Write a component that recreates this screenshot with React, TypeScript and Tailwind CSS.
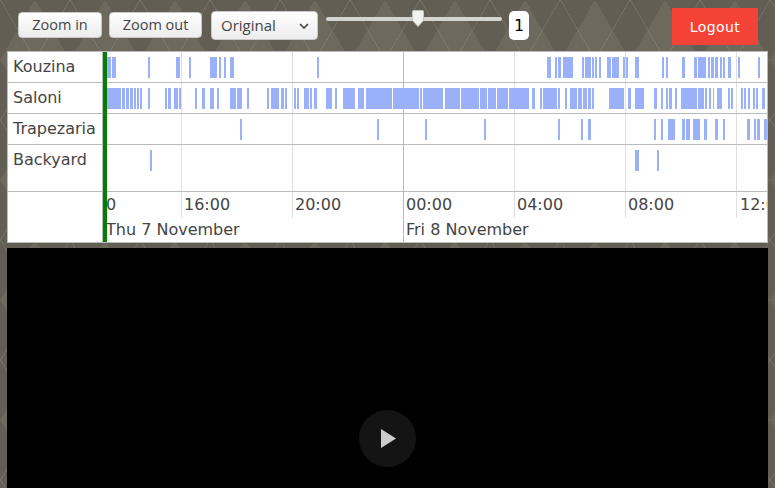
import React from "react";

type Span = [number, number];

// [start, end] in page pixels, taken from the recording timeline
const rows: { name: string; height: string; spans: Span[] }[] = [
  {
    name: "Kouzina",
    height: "h-[31px]",
    spans: [
      [107, 111], [112, 116], [148, 150], [176, 180], [189, 191], [210, 217], [219, 221], [224, 226], [230, 234], [317, 319],
      [547, 551], [555, 557], [558, 561], [563, 573], [582, 584], [585, 591], [592, 594], [595, 597], [599, 601], [607, 611],
      [612, 619], [623, 625], [626, 628], [635, 639], [662, 664], [666, 668], [682, 685], [694, 697], [698, 706], [708, 710],
      [711, 714], [715, 718], [720, 722], [723, 725], [728, 731], [738, 740], [758, 760],
    ],
  },
  {
    name: "Saloni",
    height: "h-[31px]",
    spans: [
      [107, 121], [122, 125], [126, 129], [130, 133], [134, 136], [137, 139], [140, 142], [148, 150], [165, 167], [168, 171],
      [174, 178], [179, 181], [195, 197], [202, 205], [210, 214], [217, 219], [230, 236], [237, 242], [247, 249], [267, 269],
      [271, 279], [281, 284], [285, 287], [294, 296], [297, 299], [304, 309], [310, 312], [314, 317], [326, 332], [335, 337],
      [343, 355], [358, 364], [366, 392], [393, 419], [420, 422], [423, 443], [445, 460], [461, 479], [480, 487], [488, 496],
      [497, 508], [509, 529], [532, 535], [540, 542], [543, 557], [558, 560], [565, 567], [570, 577], [578, 582], [583, 587],
      [588, 591], [592, 594], [609, 624], [628, 631], [635, 644], [654, 657], [661, 663], [666, 668], [669, 672], [675, 677],
      [681, 697], [698, 704], [705, 707], [709, 711], [713, 714], [717, 722], [728, 730], [731, 733], [741, 743], [744, 746],
      [748, 750], [753, 755], [756, 758], [762, 765],
    ],
  },
  {
    name: "Trapezaria",
    height: "h-[31px]",
    spans: [
      [240, 242], [377, 379], [425, 427], [484, 486], [558, 560], [581, 583], [588, 591], [654, 656], [661, 663], [668, 675],
      [682, 685], [686, 690], [693, 700], [704, 707], [715, 718], [723, 725], [747, 750], [754, 756], [757, 760], [764, 767],
    ],
  },
  {
    name: "Backyard",
    height: "h-[47px]",
    spans: [[150, 152], [635, 639], [657, 659]],
  },
];

const gridLines = [74, 185, 407, 518, 629];
const ticks: [string, number][] = [
  ["12:00", -37],
  ["16:00", 77],
  ["20:00", 188],
  ["00:00", 299],
  ["04:00", 410],
  ["08:00", 521],
  ["12:00", 633],
];

const Bars = ({ spans }: { spans: Span[] }) => (
  <>
    {spans.map(([start, end]) => (
      <div
        key={start}
        className="absolute top-[5px] h-[21px] bg-[#9ab0f8]"
        style={{ left: start - 107, width: end - start }}
      />
    ))}
  </>
);

const Lines = ({ short }: { short?: boolean }) => (
  <>
    {gridLines.map((x) => (
      <div
        key={x}
        className={`absolute top-0 w-px bg-[#e0e0e0] ${short ? "h-[26px]" : "h-full"}`}
        style={{ left: x }}
      />
    ))}
    <div className="absolute top-0 left-[296px] h-full w-px bg-[#bbbbbb]" />
  </>
);

export default function App() {
  return (
    <div className="h-screen overflow-hidden bg-[#6d695c] [background-image:repeating-linear-gradient(120deg,rgba(255,255,255,.1),rgba(255,255,255,.1)_1px,transparent_1px,transparent_60px),repeating-linear-gradient(60deg,rgba(255,255,255,.1),rgba(255,255,255,.1)_1px,transparent_1px,transparent_60px),linear-gradient(60deg,rgba(0,0,0,.1)_25%,transparent_25%,transparent_75%,rgba(0,0,0,.1)_75%,rgba(0,0,0,.1)),linear-gradient(120deg,rgba(0,0,0,.1)_25%,transparent_25%,transparent_75%,rgba(0,0,0,.1)_75%,rgba(0,0,0,.1))] [background-size:70px_120px] font-['DejaVu_Sans',sans-serif] text-[#444444]">
      {/* Toolbar */}
      <div className="flex h-[51px] items-start pl-[18px] pt-[8px]">
        <button className="mt-[4px] h-[26px] w-[84px] rounded-[4px] border border-[#c9c9c9] bg-gradient-to-b from-white to-[#ececec] font-['Open_Sans',sans-serif] text-[14.5px] text-[#444444]">
          Zoom in
        </button>
        <button className="ml-[7px] mt-[4px] h-[26px] w-[93px] rounded-[4px] border border-[#c9c9c9] bg-gradient-to-b from-white to-[#ececec] font-['Open_Sans',sans-serif] text-[14.5px] text-[#444444]">
          Zoom out
        </button>
        <div className="ml-[9px] mt-[3px] flex h-[29px] w-[107px] items-center justify-between rounded-[4px] border border-[#c9c9c9] bg-gradient-to-b from-white to-[#ececec] pl-[9px] pr-[8px] font-['Open_Sans',sans-serif] text-[15px] text-[#444444]">
          Original
          <svg width="10" height="6" viewBox="0 0 10 6" fill="none" stroke="#444444" strokeWidth="1.6">
            <path d="M1 1l4 4 4-4" />
          </svg>
        </div>
        {/* Zoom slider */}
        <div className="relative ml-[8px] mt-[9px] h-[4px] w-[176px] rounded-full bg-[#d4d4d0]">
          <svg className="absolute left-[86px] top-[-7px]" width="12" height="17" viewBox="0 0 12 17">
            <path d="M1.5 0.5h9a1 1 0 0 1 1 1v9l-5.5 6-5.5-6v-9a1 1 0 0 1 1-1z" fill="#f1f1ee" stroke="#c4c4c0" />
          </svg>
        </div>
        <div className="ml-[7px] mt-[3px] flex h-[29px] w-[20px] items-center justify-center rounded-[5px] bg-white text-[16px] text-black">
          1
        </div>
        <button className="ml-[143px] h-[37px] w-[86px] bg-[#f44336] pt-px text-[14px] tracking-[0.4px] text-white">
          Logout
        </button>
      </div>

      {/* Timeline */}
      <div className="ml-[7px] flex w-[761px] border border-[#bbbbbb] bg-white text-[16px]">
        <div className="w-[95px] shrink-0 border-r border-[#bbbbbb]">
          {rows.map((row) => (
            <div key={row.name} className={`${row.height} border-b border-[#bbbbbb] pl-[5px] pt-[5px] leading-[20px]`}>
              {row.name}
            </div>
          ))}
          <div className="h-[50px]" />
        </div>
        <div className="min-w-0 flex-1 overflow-hidden border-l-4 border-[#008000]">
          {rows.map((row) => (
            <div key={row.name} className={`relative ${row.height} border-b border-[#bbbbbb]`}>
              <Lines />
              <Bars spans={row.spans} />
            </div>
          ))}
          <div className="relative h-[50px]">
            <Lines short />
            {ticks.map(([label, x]) => (
              <span key={x} className="absolute top-[3px] leading-[20px]" style={{ left: x }}>
                {label}
              </span>
            ))}
            <span className="absolute left-[-1px] top-[28px] leading-[20px]">Thu 7 November</span>
            <span className="absolute left-[299px] top-[28px] leading-[20px]">Fri 8 November</span>
          </div>
        </div>
      </div>

      {/* Video */}
      <div className="ml-[7px] mt-[5px] flex h-[381px] w-[761px] items-center justify-center bg-black">
        <div className="flex h-[57px] w-[57px] items-center justify-center rounded-full bg-[#141414]">
          <svg width="15" height="19" viewBox="0 0 15 19" className="ml-[2px]">
            <path d="M0 0l15 9.5L0 19z" fill="#cccccc" />
          </svg>
        </div>
      </div>
    </div>
  );
}
